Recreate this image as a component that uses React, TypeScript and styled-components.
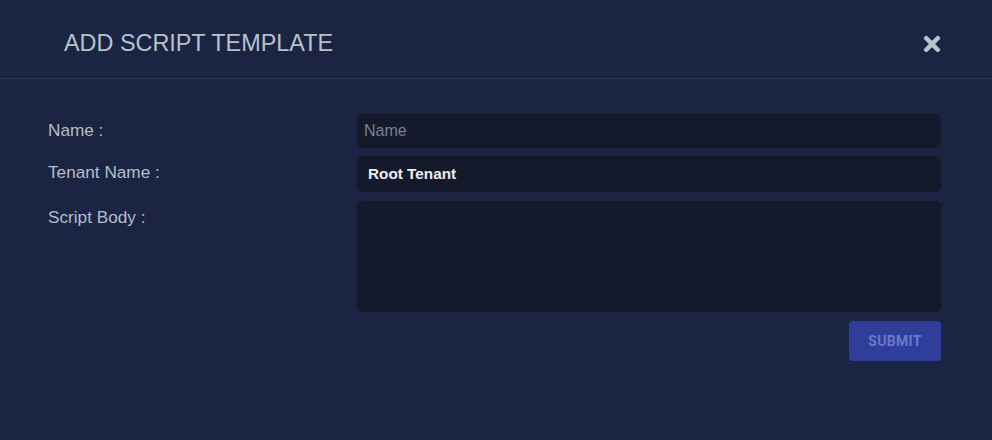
import React from "react";
import styled, { createGlobalStyle } from "styled-components";
import { FaTimes } from "react-icons/fa";

const Global = createGlobalStyle`
  html, body { margin: 0; padding: 0; background: #1c2444; }
  body { font-family: "Liberation Sans", Arial, sans-serif; }
  * { box-sizing: border-box; }
`;

const Modal = styled.div`
  width: 992px;
  height: 440px;
  background: #1c2444;
  display: flex;
  flex-direction: column;
`;

const Header = styled.div`
  height: 79px;
  border-bottom: 1px solid #2c3750;
  display: flex;
  align-items: center;
  justify-content: space-between;
  padding: 0 48px 0 64px;
`;

const Title = styled.h2`
  margin: 0;
  padding-top: 8px;
  font-size: 23.4px;
  font-weight: 400;
  color: #b6c2ca;
`;

const Close = styled.button`
  background: none;
  border: none;
  padding: 0;
  color: #b8c4cc;
  display: flex;
  cursor: pointer;
  margin-top: 10px;
`;

const Body = styled.div`
  padding: 35px 51px 0 48px;
  display: grid;
  grid-template-columns: 309px 1fr;
  row-gap: 8px;
`;

const Label = styled.label<{ $pt: number }>`
  font-size: 17.2px;
  color: #b3bfc8;
  padding-top: ${(p) => p.$pt}px;
`;

const Input = styled.input<{ $h: number; $bold?: boolean }>`
  height: ${(p) => p.$h}px;
  width: 100%;
  background: #141a2c;
  border: none;
  border-radius: 5px;
  outline: none;
  padding: 0 ${(p) => (p.$bold ? 11 : 7)}px;
  font-family: "Liberation Sans", Arial, sans-serif;
  font-size: ${(p) => (p.$bold ? 15.3 : 16)}px;
  font-weight: ${(p) => (p.$bold ? 700 : 400)};
  color: #ecedf0;
  &::placeholder { color: #7c8190; }
`;

const TextArea = styled.textarea`
  height: 111px;
  width: 100%;
  margin-top: 1px;
  background: #141a2c;
  border: none;
  border-radius: 5px;
  outline: none;
  resize: none;
  padding: 8px;
  color: #ecedf0;
`;

const Footer = styled.div`
  grid-column: 2;
  display: flex;
  justify-content: flex-end;
  padding-top: 1px;
`;

const Submit = styled.button`
  width: 92px;
  height: 40px;
  background: #2f3d9d;
  border: none;
  border-radius: 4px;
  color: #6b79c6;
  font-family: Roboto, "Liberation Sans", sans-serif;
  font-size: 14px;
  font-weight: 700;
  letter-spacing: 0.3px;
`;

export default function App() {
  return (
    <>
      <Global />
      <Modal>
        <Header>
          <Title>ADD SCRIPT TEMPLATE</Title>
          <Close aria-label="close">
            <FaTimes size={24} />
          </Close>
        </Header>
        <Body>
          <Label $pt={6}>Name :</Label>
          <Input $h={34} placeholder="Name" />
          <Label $pt={6}>Tenant Name :</Label>
          <Input $h={36} $bold defaultValue="Root Tenant" />
          <Label $pt={7}>Script Body :</Label>
          <TextArea />
          <Footer>
            <Submit>SUBMIT</Submit>
          </Footer>
        </Body>
      </Modal>
    </>
  );
}
